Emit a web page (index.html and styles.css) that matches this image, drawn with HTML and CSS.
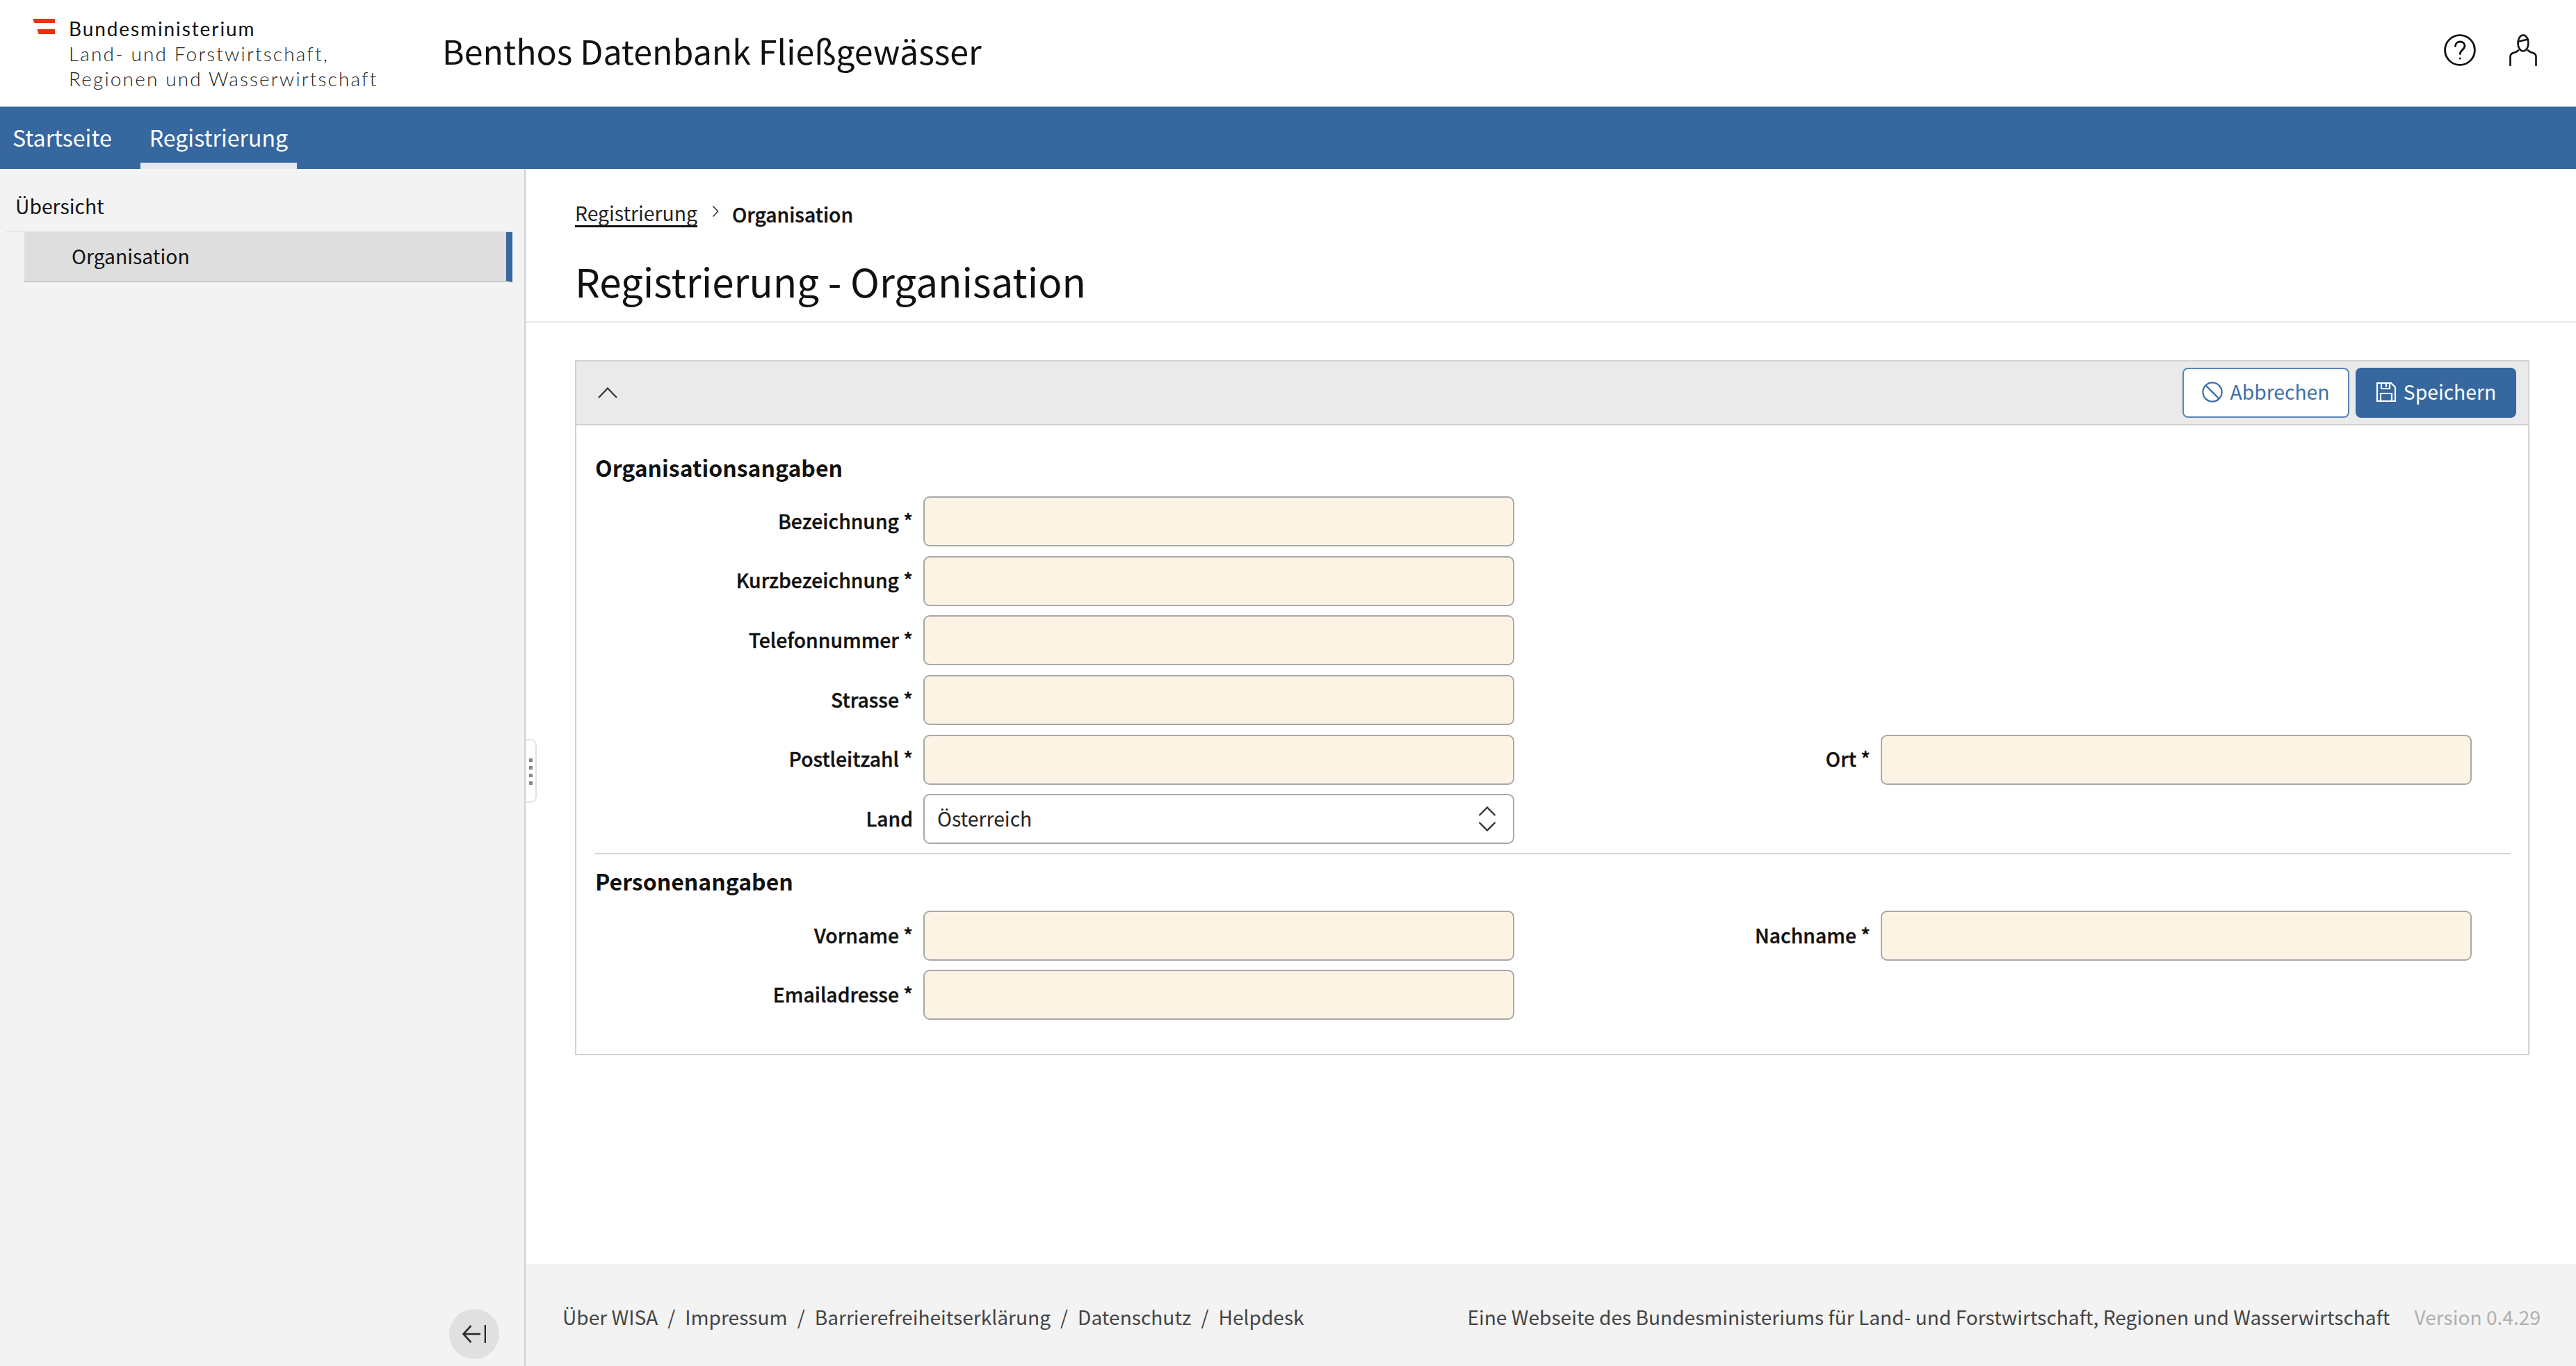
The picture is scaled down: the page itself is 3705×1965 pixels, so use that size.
FILE: index.html
```html
<!DOCTYPE html>
<html lang="de">
<head>
<meta charset="utf-8">
<title>Benthos Datenbank Fließgewässer</title>
<link rel="stylesheet" href="styles.css">
</head>
<body>
<div class="app">
  <header class="topbar">
    <div class="logo">
      <svg class="flag" viewBox="0 0 32 22"><path d="M0 0H32V6H2.500Z" fill="#e6320f"/><path d="M6.500 15H32V22H8.500Z" fill="#e6320f"/></svg>
      <div class="logo-text">
        <div class="logo-strong">Bundesministerium</div>
        <div>Land- und Forstwirtschaft,</div>
        <div>Regionen und Wasserwirtschaft</div>
      </div>
    </div>
    <div class="app-title">Benthos Datenbank Fließgewässer</div>
    <div class="top-icons">
      <svg class="icon-help" viewBox="0 0 46 46" fill="none" stroke="#111" stroke-width="2.800" stroke-linecap="round"><circle cx="23" cy="23" r="21.400"/><path d="M16.500 17.500c0-4 3-6.500 6.800-6.500 3.900 0 6.700 2.500 6.700 6 0 5.500-6.700 5.800-6.700 11.500"/><circle cx="23.300" cy="35" r="1.500" fill="#111" stroke="none"/></svg>
      <svg class="icon-user" viewBox="0 0 40 46" fill="none" stroke="#111" stroke-width="2.600" stroke-linecap="round"><ellipse cx="20" cy="13" rx="7.500" ry="11.500"/><path d="M12.500 11 27 7.500"/><path d="M13 23.500c-2 2-4.500 3-7 3.500C3 28 1.500 29.500 1.500 32.500V45"/><path d="M27 23.500c2 2 4.500 3 7 3.500 3 1 4.500 2.500 4.500 5.500V45"/></svg>
    </div>
  </header>
  <nav class="mainnav">
    <a class="nav-item">Startseite</a>
    <a class="nav-item nav-active">Registrierung</a>
  </nav>
  <div class="body-row">
    <aside class="sidebar">
      <div class="side-head">Übersicht</div>
      <div class="side-line">
        <div class="side-item">Organisation</div>
      </div>
      <button class="collapse" type="button" aria-label="Einklappen">
        <svg viewBox="0 0 34 28" fill="none" stroke="#2b2b2b" stroke-width="2.600"><path d="M1.500 14H26"/><path d="M12.500 2 1.500 14l11 12"/><path d="M33 1v26"/></svg>
      </button>
    </aside>
    <main class="main">
      <div class="handle"><i></i><i></i><i></i><i></i></div>
      <div class="content">
        <div class="page-head">
          <div class="crumbs">
            <a class="crumb-link">Registrierung</a>
            <svg class="crumb-sep" viewBox="0 0 10 18" fill="none" stroke="#333" stroke-width="1.600"><path d="M1.500 1.500 8.500 9l-7 7.500"/></svg>
            <span class="crumb-current">Organisation</span>
          </div>
          <h1 class="page-title">Registrierung - Organisation</h1>
        </div>
        <section class="card">
          <div class="card-head">
            <svg class="chev-up" viewBox="0 0 28 16" fill="none" stroke="#333" stroke-width="2.200"><path d="M1 15 14 1.500 27 15"/></svg>
            <div class="actions">
              <button class="btn btn-outline" type="button">
                <svg class="btn-icon" viewBox="0 0 32 32" fill="none" stroke="#3f6fa8" stroke-width="2.400"><circle cx="16" cy="16" r="14.500"/><path d="M6 6 26 26"/></svg>
                Abbrechen
              </button>
              <button class="btn btn-solid" type="button">
                <svg class="btn-icon" viewBox="0 0 30 30" fill="none" stroke="#fff" stroke-width="2.200"><path d="M2 2H22L28 8V28H2Z"/><path d="M8 2V10H20V2"/><path d="M15 3v5"/><path d="M7 28V17H23V28"/></svg>
                Speichern
              </button>
            </div>
          </div>
          <div class="card-body">
            <h2 class="section-title">Organisationsangaben</h2>
            <div class="form-grid">
              <label class="field-label">Bezeichnung *</label><input class="input col-a">
              <label class="field-label">Kurzbezeichnung *</label><input class="input col-a">
              <label class="field-label">Telefonnummer *</label><input class="input col-a">
              <label class="field-label">Strasse *</label><input class="input col-a">
              <label class="field-label">Postleitzahl *</label><input class="input">
              <label class="field-label col-c">Ort *</label><input class="input">
              <label class="field-label">Land</label>
              <div class="select col-a">
                <span>Österreich</span>
                <svg class="select-icon" viewBox="0 0 26 36" fill="none" stroke="#333" stroke-width="2.400"><path d="M1.500 13 13 1.500 24.500 13"/><path d="M1.500 23 13 34.500 24.500 23"/></svg>
              </div>
            </div>
            <hr class="divider">
            <h2 class="section-title section-person">Personenangaben</h2>
            <div class="form-grid form-tight">
              <label class="field-label">Vorname *</label><input class="input">
              <label class="field-label col-c">Nachname *</label><input class="input">
              <label class="field-label">Emailadresse *</label><input class="input col-a">
            </div>
          </div>
        </section>
      </div>
      <footer class="footer">
        <div class="foot-links">
          <a>Über WISA</a><span>/</span><a>Impressum</a><span>/</span><a>Barrierefreiheitserklärung</a><span>/</span><a>Datenschutz</a><span>/</span><a>Helpdesk</a>
        </div>
        <div class="foot-right">
          <span>Eine Webseite des Bundesministeriums für Land- und Forstwirtschaft, Regionen und Wasserwirtschaft</span>
          <span class="version">Version 0.4.29</span>
        </div>
      </footer>
    </main>
  </div>
</div>
</body>
</html>
```
FILE: styles.css
```css
* { box-sizing: border-box; }
html, body { margin: 0; height: 100%; }
body {
  font-family: "Noto Sans CJK SC", "Noto Sans", sans-serif;
  font-size: 28.300px;
  color: #111;
  background: #fff;
}
.app { display: flex; flex-direction: column; height: 1965px; }

.topbar {
  height: 153px;
  flex: none;
  display: flex;
  align-items: center;
  padding-left: 47px;
  padding-right: 56px;
}
.logo { display: flex; width: 589px; align-items: flex-start; }
.flag { width: 32px; height: 22px; margin-top: 4px; margin-right: 20px; flex: none; }
.logo-text {
  font-family: "Lato", sans-serif;
  font-size: 28px;
  line-height: 36px;
  letter-spacing: 2.150px;
  color: #222;
  font-weight: 300;
}
.logo-strong { color: #111; font-weight: 400; letter-spacing: 1.900px; }
.app-title { font-size: 48.300px; color: #111; line-height: 80px; margin-bottom: 10px; }
.top-icons { margin-left: auto; margin-bottom: 10px; display: flex; align-items: center; gap: 48px; }
.icon-help { width: 46px; height: 46px; }
.icon-user { width: 40px; height: 46px; margin-top: 1px; }

.mainnav {
  height: 90px;
  flex: none;
  background: #36679e;
  border-top: 1px solid #8fa9c6;
  display: flex;
  padding-left: 5px;
}
.nav-item {
  color: #fff;
  font-size: 32.100px;
  padding: 0 13px;
  line-height: 86px;
  height: 89px;
  margin-right: 28px;
  border-bottom: 9px solid transparent;
}
.nav-active { border-bottom-color: #e3e9f2; }

.body-row { flex: 1; display: flex; min-height: 0; }
.sidebar {
  width: 756px;
  flex: none;
  background: #f3f3f3;
  border-right: 2px solid #cfcfcf;
  display: flex;
  flex-direction: column;
  padding: 0 17px 10px 8px;
}
.side-head { line-height: 40px; padding-left: 14px; margin-top: 33px; height: 57px; }
.side-line { border-top: 1px solid #dcdcdc; padding-left: 27px; }
.side-item {
  height: 72px;
  line-height: 67px;
  padding-left: 68px;
  background: #dedede;
  border-right: 9px solid #36679e;
  border-bottom: 2px solid #c8c8c8;
}
.collapse {
  margin-top: auto;
  align-self: flex-end;
  margin-right: 19px;
  width: 72px;
  height: 72px;
  border: 0;
  border-radius: 50%;
  background: #e0e0e0;
  padding: 0;
  display: flex;
  align-items: center;
  justify-content: center;
}
.collapse svg { width: 34px; height: 28px; }

.main { flex: 1; display: flex; flex-direction: column; position: relative; min-width: 0; }
.handle {
  position: absolute;
  left: 0;
  top: 820px;
  width: 16px;
  height: 92px;
  background: #fff;
  border: 2px solid #e2e2e2;
  border-left: 0;
  border-radius: 0 9px 9px 0;
  display: flex;
  flex-direction: column;
  align-items: flex-start;
  gap: 6.500px;
  padding: 26px 0 0 5px;
}
.handle i { width: 4.500px; height: 4.500px; background: #888; display: block; }
.content { flex: 1; min-height: 0; }
.page-head { padding: 45px 71px 0; border-bottom: 2px solid #e8e8e8; height: 221px; }
.crumbs { display: flex; align-items: center; height: 38px; }
.crumb-link { border-bottom: 3px solid #111; line-height: 36px; color: #222; }
.crumb-sep { width: 10px; height: 18px; margin: 0 19px 6px 21px; }
.crumb-current { font-weight: 500; -webkit-text-stroke: 0.400px #111; }
.page-title { margin: 37px 0 0; font-size: 56.500px; font-weight: 400; line-height: 80px; color: #111; }

.card { margin: 54px 67px 0 71px; border: 2px solid #d2d2d2; height: 1000px; }
.card-head {
  height: 92px;
  background: #eaeaea;
  border-bottom: 2px solid #d2d2d2;
  display: flex;
  align-items: center;
  justify-content: space-between;
  padding: 0 17px 1px 31px;
}
.chev-up { width: 28px; height: 16px; }
.actions { display: flex; gap: 9px; }
.btn {
  height: 72px;
  border-radius: 8px;
  font-family: inherit;
  font-size: 28.300px;
  display: flex;
  align-items: center;
  justify-content: center;
  gap: 10px;
  padding: 0 0 4px;
}
.btn-outline { width: 240px; background: #fff; border: 2px solid #5a85b8; color: #3f6fa8; }
.btn-solid { width: 231px; background: #36679e; border: 0; color: #fff; }
.btn-icon { width: 30px; height: 30px; flex: none; margin-top: 3px; }

.card-body { padding: 40px 25px 0 27px; }
.section-title { margin: 0 0 22px; font-size: 32px; line-height: 40px; font-weight: 700; }
.section-person { margin-bottom: 23px; }
.form-grid {
  display: grid;
  grid-template-columns: 457px 850px 497px 850px;
  column-gap: 15px;
  row-gap: 13.700px;
  grid-auto-rows: 72px;
  align-items: center;
}
.form-tight { row-gap: 13px; }
.form-grid .col-a { grid-column: 2; }
.form-grid .col-c { grid-column: 3; }
.form-grid label:not(.col-c) { grid-column: 1; }
.field-label { text-align: right; font-weight: 500; padding-bottom: 4px; -webkit-text-stroke: 0.400px #111; }
.input {
  display: block;
  height: 72px;
  width: 850px;
  background: #fdf3e4;
  border: 2px solid #a8a8a8;
  border-radius: 9px;
  padding: 0 16px;
  font: inherit;
}
.select {
  height: 72px;
  width: 850px;
  background: #fff;
  border: 2px solid #a8a8a8;
  border-radius: 9px;
  padding: 0 24px 0 18px;
  display: flex;
  align-items: center;
  justify-content: space-between;
  color: #222;
}
.select span { margin-bottom: 3px; }
.select-icon { width: 26px; height: 36px; }
.divider { margin: 13px 0 18px; border: 0; border-top: 2px solid #d6d6d6; }

.footer {
  height: 147px;
  flex: none;
  background: #f3f3f3;
  display: flex;
  align-items: center;
  justify-content: space-between;
  padding: 4px 51px 0 53px;
  color: #444;
  white-space: nowrap;
  font-size: 28.130px;
}
.foot-links { display: flex; gap: 14px; }
.foot-right { display: flex; gap: 35px; }
.version { color: #b0b0b0; }
```
